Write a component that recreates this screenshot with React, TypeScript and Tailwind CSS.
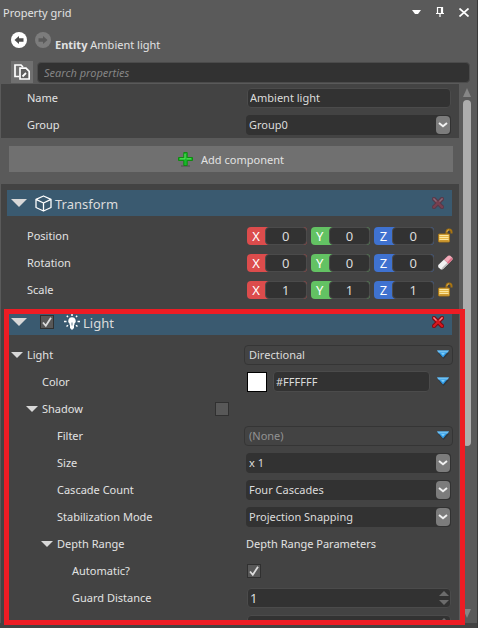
import React, { useId, useState } from "react";

const FIELD = "rounded border border-[#4b4b4b] bg-[#323232] text-[#dcdcdc] outline-none";

function Twisty({ size = "small" }: { size?: "small" | "large" }) {
  const large = size === "large";
  return (
    <svg
      className={large ? "h-2 w-4 shrink-0" : "h-1.5 w-3 shrink-0"}
      viewBox="0 0 16 8"
      preserveAspectRatio="none"
      aria-hidden="true"
    >
      <path d="M0 0H16L8 8Z" fill="#d8d8d8" />
    </svg>
  );
}

function BlueArrow() {
  return (
    <svg className="h-[9px] w-3" viewBox="0 0 12 9" aria-hidden="true">
      <path d="M1 3H12L6.500 9Z" fill="#30363a" />
      <path d="M0 0.500H12L6 7.500Z" fill="#2f9be8" />
      <path d="M0 0.500H12L10.500 2.500H1.500Z" fill="#6fc0f2" />
      <path d="M4 3H8L6 5.500Z" fill="#7ccdf8" />
    </svg>
  );
}

function Cross({ faded = false }: { faded?: boolean }) {
  return (
    <svg className={faded ? "size-3 opacity-40" : "size-3"} viewBox="0 0 12 12" aria-hidden="true">
      <path d="M2 2L10 10M10 2L2 10" stroke="#7c0a12" strokeWidth="4.200" strokeLinecap="square" />
      <path d="M2 2L10 10M10 2L2 10" stroke="#d8181f" strokeWidth="2.200" strokeLinecap="square" />
      <path d="M1.500 1.500L4.500 4.500M10.500 1.500L7.500 4.500" stroke="#f08a8e" strokeWidth="1.200" />
    </svg>
  );
}

function Padlock() {
  return (
    <svg className="h-[15px] w-[15px]" viewBox="0 0 15 15" aria-hidden="true">
      <path d="M8.500 6V4.500C8.500 2 9.500 1.500 11 1.500S13.500 2.500 13.500 4V5.500" fill="none" stroke="#a87412" strokeWidth="2" />
      <path d="M9 4C9.200 2.500 10 2 11 2" fill="none" stroke="#efcf73" strokeWidth="0.700" />
      <rect x="0.500" y="6" width="11" height="8" rx="0.800" fill="#e7b848" stroke="#a5741a" />
      <path d="M1.500 7.500H10.500M1.500 9.500H10.500M1.500 11.500H10.500" stroke="#fbe6a0" strokeWidth="1" />
      <path d="M1.500 12.800H10.500" stroke="#c08a26" />
    </svg>
  );
}

function Eraser() {
  return (
    <svg className="h-[15px] w-[15px]" viewBox="0 0 15 15" aria-hidden="true">
      <path d="M0.500 9.800L6 4.500L10.500 8.800L5 14Q3.500 15 2.300 14L0.600 12.500Q-0.300 11.200 0.500 9.800Z" fill="#f2f2f2" />
      <path d="M5 14L10.500 8.800L9.300 7.700L3.500 13.500Z" fill="#b9b9b9" />
      <path d="M6 4.500L10 0.800Q11.200 0 12.300 0.800L14.200 2.500Q15.200 3.700 14.200 5L10.500 8.800Z" fill="#f2a9b8" />
      <path d="M9 7.400L13.300 2.800L14.500 4.300L10.500 8.800Z" fill="#dd7087" />
    </svg>
  );
}

function Cube() {
  return (
    <svg className="h-[17px] w-[17px]" viewBox="0 0 17 17" fill="none" stroke="#fff" strokeWidth="1.300" strokeLinejoin="round" aria-hidden="true">
      <path d="M8.500 1L16 4.300V12.500L8.500 16L1 12.500V4.300ZM1 4.300L8.500 8L16 4.300M8.500 8V16" />
    </svg>
  );
}

function Bulb() {
  return (
    <svg className="h-4 w-4" viewBox="0 0 16 16" aria-hidden="true">
      <path d="M8 3.200A3.700 3.700 0 0 0 5.600 9.800V11H10.400V9.800A3.700 3.700 0 0 0 8 3.200Z" fill="#fff" />
      <path d="M6 11H10V14.500H9V15.500H7V14.500H6Z" fill="#fff" />
      <path d="M8 0V2M2.800 1.800L4 3M13.200 1.800L12 3M0 7.500H2.500M13.500 7.500H16M2.500 12.500L4 11.200M13.500 12.500L12 11.200" stroke="#fff" strokeWidth="1.500" />
      <path d="M8 8.500V11.500" stroke="#3a5a70" strokeWidth="0.800" />
    </svg>
  );
}

function NavArrow({ back = false }: { back?: boolean }) {
  return (
    <svg className={back ? "size-4" : "size-4 -scale-x-100"} viewBox="0 0 16 16" aria-hidden="true">
      <circle cx="8" cy="8" r="8" fill={back ? "#fff" : "#7c7c7c"} />
      <path d="M3.500 8L8 4V6.300H12.500V9.700H8V12Z" fill={back ? "#4c4c4c" : "#5a5a5a"} />
    </svg>
  );
}

function Check({ label, on = false }: { label: string; on?: boolean }) {
  const [checked, setChecked] = useState(on);
  return (
    <span className="grid size-3.5 shrink-0">
      <input
        type="checkbox"
        aria-label={label}
        checked={checked}
        onChange={(e) => setChecked(e.target.checked)}
        className="col-start-1 row-start-1 size-3.5 appearance-none border border-[#303030] bg-[#585858]"
      />
      {checked && (
        <svg className="pointer-events-none col-start-1 row-start-1 size-3.5" viewBox="0 0 14 14" aria-hidden="true">
          <path d="M3 7.500L5.800 10.800L11 2.800" fill="none" stroke="#dcdcdc" strokeWidth="1.800" />
        </svg>
      )}
    </span>
  );
}

type RowProps = {
  label: string;
  level?: number;
  open?: boolean;
  htmlFor?: string;
  extra?: React.ReactNode;
  children?: React.ReactNode;
};

const INDENT = ["pl-2.5", "pl-[25px]", "pl-10", "pl-[55px]"];

function Row({ label, level = 0, open, htmlFor, extra, children }: RowProps) {
  return (
    <div className="flex h-[27px] shrink-0 items-center">
      <div className={`flex w-[245px] shrink-0 items-center ${INDENT[level]}`}>
        <span className="flex w-4 shrink-0">{open && <Twisty />}</span>
        <label htmlFor={htmlFor} className="flex-1">{label}</label>
        {extra}
      </div>
      <div className="flex min-w-0 flex-1 items-center">{children}</div>
    </div>
  );
}

function SelectRow({ label, level, value }: { label: string; level?: number; value: string }) {
  const id = useId();
  return (
    <Row label={label} level={level} htmlFor={id}>
      <div className="mr-2 grid h-5 flex-1 rounded-sm bg-[#323232] pr-px">
        <select id={id} className="col-start-1 row-start-1 h-5 w-full appearance-none bg-transparent pl-[3px] text-[#dcdcdc] outline-none">
          <option>{value}</option>
        </select>
        <span className="pointer-events-none col-start-1 row-start-1 grid h-[18px] w-3.5 place-items-center self-center justify-self-end rounded-sm bg-[#7c7c7c]">
          <svg className="h-1.5 w-2.5" viewBox="0 0 10 6" aria-hidden="true">
            <path d="M1 1L5 4.200L9 1" fill="none" stroke="#f0f0f0" strokeWidth="2" />
          </svg>
        </span>
      </div>
    </Row>
  );
}

function PickerRow({ label, level, open, value, muted }: { label: string; level?: number; open?: boolean; value: string; muted?: boolean }) {
  const id = useId();
  return (
    <Row label={label} level={level} open={open} htmlFor={id}>
      <div className="-ml-0.5 mr-1.5 grid h-5 flex-1 rounded-sm border border-[#353535]">
        <select
          id={id}
          className={`col-start-1 row-start-1 h-[18px] w-full appearance-none bg-transparent pl-1 outline-none ${muted ? "text-[#929292]" : "text-[#dcdcdc]"}`}
        >
          <option>{value}</option>
        </select>
        <span className="pointer-events-none col-start-1 row-start-1 mr-[3px] self-center justify-self-end">
          <BlueArrow />
        </span>
      </div>
    </Row>
  );
}

const AXES = [
  { name: "X", color: "bg-[#dc4c4c]" },
  { name: "Y", color: "bg-[#63c263]" },
  { name: "Z", color: "bg-[#3f72d0]" },
];

function VectorRow({ label, value, icon, action }: { label: string; value: string; icon: React.ReactNode; action: string }) {
  return (
    <Row label={label}>
      <div className="ml-px mr-1.5 flex flex-1 items-center gap-1">
        {AXES.map((axis) => (
          <label key={axis.name} className={`flex h-[18px] min-w-0 flex-1 rounded ${axis.color}`}>
            <span className="w-[18px] shrink-0 text-center text-[13px] leading-[18px] text-white">{axis.name}</span>
            <input
              aria-label={`${label} ${axis.name}`}
              defaultValue={value}
              className={`h-[18px] w-full min-w-0 text-center text-[13px] leading-4 ${FIELD}`}
            />
          </label>
        ))}
        <button aria-label={action} className="w-[15px] shrink-0">{icon}</button>
      </div>
    </Row>
  );
}

function SpinRow({ label, name, value }: { label?: string; name: string; value?: string }) {
  const id = useId();
  return (
    <Row label={label ?? ""} level={3} htmlFor={id}>
      <div className={`ml-px mr-2 flex h-5 min-w-0 flex-1 items-center ${FIELD}`}>
        <input id={id} aria-label={name} defaultValue={value} className="h-[18px] w-full min-w-0 flex-1 bg-transparent pl-0.5 text-[13px] outline-none" />
        <span className="mr-px flex shrink-0 flex-col gap-1">
          <button aria-label={`Increase ${name}`}>
            <svg className="block h-[5px] w-2.5" viewBox="0 0 10 5" aria-hidden="true"><path d="M0 5H10L5 0Z" fill="#6c6c6c" /></svg>
          </button>
          <button aria-label={`Decrease ${name}`}>
            <svg className="block h-[5px] w-2.5" viewBox="0 0 10 5" aria-hidden="true"><path d="M0 0H10L5 5Z" fill="#6c6c6c" /></svg>
          </button>
        </span>
      </div>
    </Row>
  );
}

function SectionHeader({ title, icon, toggle, faded }: { title: string; icon: React.ReactNode; toggle?: boolean; faded?: boolean }) {
  return (
    <div className="ml-1.5 mr-[7px] flex h-[26px] shrink-0 items-center bg-[#3a5a70] pl-1 pr-2">
      <Twisty size="large" />
      {toggle && <span className="ml-[13px] mr-0.5 flex"><Check label={`Enable ${title}`} on /></span>}
      <span className="ml-2 mr-[3px] flex">{icon}</span>
      <h2 className="flex-1 pt-0.5 text-[13px] text-[#dcdcdc]">{title}</h2>
      <button aria-label={`Remove ${title}`}><Cross faded={faded} /></button>
    </div>
  );
}

export default function App() {
  return (
    <main className="relative flex h-screen flex-col overflow-hidden border-r border-[#3a3a3a] bg-[#5a5a5a] font-['Noto_Sans',sans-serif] text-[11px] leading-[17px] text-[#e2e2e2]">
      <header className="flex h-6 shrink-0 items-center justify-between pl-[3px] pr-2">
        <h1>Property grid</h1>
        <div className="flex items-center gap-3.5">
          <button aria-label="Window options">
            <svg className="block h-[5px] w-[9px]" viewBox="0 0 9 5" aria-hidden="true"><path d="M0 0H9L6 4H3Z" fill="#fff" /></svg>
          </button>
          <button aria-label="Pin">
            <svg className="block h-2.5 w-2.5" viewBox="0 0 10 10" fill="none" stroke="#fff" aria-hidden="true">
              <path d="M2.500 6V0.500H7.500V6M6.500 0.500V6M1 6.500H9M5 7V10" strokeWidth="1.200" />
            </svg>
          </button>
          <button aria-label="Close">
            <svg className="block h-[9px] w-2.5" viewBox="0 0 10 9" aria-hidden="true">
              <path d="M0.500 0.500L9.500 8.500M9.500 0.500L0.500 8.500" stroke="#fff" strokeWidth="1.700" />
            </svg>
          </button>
        </div>
      </header>

      <nav className="flex h-8 shrink-0 items-center pl-[11px]">
        <button aria-label="Back"><NavArrow back /></button>
        <button aria-label="Forward" className="ml-2"><NavArrow /></button>
        <p className="ml-1 mt-2"><strong>Entity</strong> Ambient light</p>
      </nav>

      <div className="flex h-7 shrink-0 items-center gap-1 pl-[11px] pr-[7px] pt-1">
        <button aria-label="Show edited properties" className="grid size-[22px] place-items-center bg-[#707070]">
          <svg className="size-4" viewBox="0 0 16 16" fill="none" stroke="#fff" strokeWidth="1.700" aria-hidden="true">
            <path d="M5 12.500H1V1H7L9 3" />
            <path d="M6 4.200H12L15.200 7.500V15H6Z" fill="#606060" />
            <path d="M8.500 12.500L12 9" strokeWidth="1.800" />
          </svg>
        </button>
        <input
          aria-label="Search properties"
          placeholder="Search properties"
          className={`h-[21px] min-w-0 flex-1 px-1.5 placeholder:italic placeholder:text-[#858585] ${FIELD}`}
        />
      </div>

      <div className="flex min-h-0 flex-1 pl-px">
        <div className="flex min-w-0 flex-1 flex-col overflow-hidden bg-[#434343]">
          <Row label="Name" htmlFor="entity-name">
            <input id="entity-name" defaultValue="Ambient light" className={`ml-px mr-2 h-5 min-w-0 flex-1 px-0.5 ${FIELD}`} />
          </Row>
          <SelectRow label="Group" value="Group0" />

          <div className="shrink-0 bg-[#5a5a5a] pb-3 pl-2 pr-1.5 pt-2">
            <button className="flex h-[26px] w-full items-center justify-center gap-2 bg-[#707070]">
              <svg className="size-[15px]" viewBox="0 0 15 15" aria-hidden="true">
                <path d="M3 14H12" stroke="#4c4c4c" />
                <path d="M5.800 0.500H9.200V5.500H14.500V8.500H9.200V13.500H5.800V8.500H0.500V5.500H5.800Z" fill="#16b92a" stroke="#128912" />
                <path d="M7 2V6.800H2M8.500 6.800H13" fill="none" stroke="#5be05b" />
              </svg>
              Add component
            </button>
          </div>

          <section className="flex shrink-0 flex-col gap-1.5 pt-1.5">
            <SectionHeader title="Transform" icon={<Cube />} faded />
            <div>
              <VectorRow label="Position" value="0" icon={<Padlock />} action="Unlock position" />
              <VectorRow label="Rotation" value="0" icon={<Eraser />} action="Reset rotation" />
              <VectorRow label="Scale" value="1" icon={<Padlock />} action="Unlock scale" />
            </div>
          </section>

          <section className="flex shrink-0 flex-col gap-1.5 pt-1.5">
            <SectionHeader title="Light" icon={<Bulb />} toggle />
            <div>
              <PickerRow label="Light" open value="Directional" />
              <Row label="Color" level={1} htmlFor="light-color">
                <button aria-label="Pick color" className="ml-px size-5 border border-black bg-white" />
                <input id="light-color" defaultValue="#FFFFFF" className={`ml-1.5 mr-[7px] h-[21px] min-w-0 flex-1 px-0.5 ${FIELD}`} />
                <button aria-label="Color options" className="mr-2.5"><BlueArrow /></button>
              </Row>
              <Row label="Shadow" level={1} open extra={<span className="mr-[17px] flex"><Check label="Shadow" /></span>} />
              <PickerRow label="Filter" level={2} value="(None)" muted />
              <SelectRow label="Size" level={2} value="x 1" />
              <SelectRow label="Cascade Count" level={2} value="Four Cascades" />
              <SelectRow label="Stabilization Mode" level={2} value="Projection Snapping" />
              <Row label="Depth Range" level={2} open>Depth Range Parameters</Row>
              <Row label="Automatic?" level={3}>
                <span className="ml-px flex"><Check label="Automatic?" on /></span>
              </Row>
              <SpinRow label="Guard Distance" name="Guard Distance" value="1" />
              <SpinRow name="Distance" />
            </div>
          </section>
        </div>

        <div className="flex w-[18px] shrink-0 flex-col items-center pb-[5px] pr-0.5 pt-1" aria-hidden="true">
          <svg className="h-[9px] w-2" viewBox="0 0 8 9"><path d="M4 0L8 9H0Z" fill="#868686" /></svg>
          <div className="mt-[3px] flex-1 self-stretch px-1">
            <div className="h-[68%] rounded bg-[#adadad]" />
          </div>
          <svg className="h-[9px] w-2" viewBox="0 0 8 9"><path d="M0 0H8L4 9Z" fill="#868686" /></svg>
        </div>
      </div>
      <footer className="h-[5px] shrink-0 bg-[#434343]" />

      <div className="pointer-events-none absolute bottom-[3px] left-1 right-3 top-[309px] border-[5px] border-[#ed1c24]" />
    </main>
  );
}
